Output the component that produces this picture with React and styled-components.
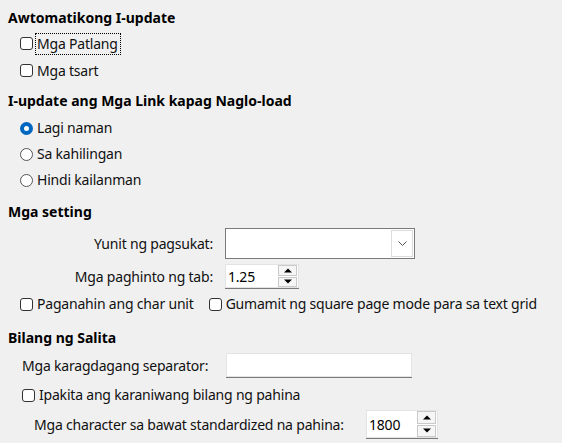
import React from 'react';
import styled, { createGlobalStyle } from 'styled-components';

const GlobalStyle = createGlobalStyle`
  html, body {
    margin: 0;
    padding: 0;
    background: #f0f0f0;
  }
  body {
    font-family: "Noto Sans", "Open Sans", sans-serif;
    font-size: 14px;
    letter-spacing: -0.2px;
    color: #111;
  }
`;

const Page = styled.div`
  width: 562px;
  height: 443px;
  box-sizing: border-box;
  padding: 7px 8px 0 8px;
  display: flex;
  flex-direction: column;
  overflow: hidden;
`;

const Section = styled.div`
  display: flex;
  flex-direction: column;
  margin-top: ${p => p.$top || 0}px;
`;

const Heading = styled.div`
  font-weight: 700;
  font-size: 14px;
  letter-spacing: 0;
  height: 22px;
  line-height: 22px;
  color: #000;
`;

const Items = styled.div`
  display: flex;
  flex-direction: column;
  padding-left: ${p => p.$indent ?? 12}px;
  margin-top: ${p => p.$top || 0}px;
`;

const Row = styled.div`
  display: flex;
  align-items: center;
  height: ${p => p.$h || 26}px;
  gap: ${p => p.$gap || 0}px;
  margin-top: ${p => p.$top || 0}px;
  padding-left: ${p => p.$indent || 0}px;
`;

const Option = styled.label`
  display: inline-flex;
  align-items: center;
  gap: 2px;
  white-space: nowrap;
`;

const Box = styled.span`
  width: 11px;
  height: 11px;
  border: 1px solid #333;
  border-radius: 3px;
  background: #fff;
  flex: none;
`;

const Radio = styled.span`
  flex: none;
  border-radius: 50%;
  background: #fff;
  width: ${p => (p.$on ? 5 : 11)}px;
  height: ${p => (p.$on ? 5 : 11)}px;
  border: ${p => (p.$on ? '4px solid #0067c0' : '1px solid #555')};
`;

const Text = styled.span`
  padding: 0 2px 1px 1px;
  border: 1px dotted ${p => (p.$focus ? '#000' : 'transparent')};
`;

const FormGrid = styled.div`
  display: grid;
  grid-template-columns: ${p => p.$label}px auto;
  column-gap: 12px;
  row-gap: 5px;
  align-items: center;
  margin-top: 5px;
`;

const Label = styled.span`
  text-align: ${p => p.$align || 'right'};
  width: ${p => (p.$w ? `${p.$w}px` : 'auto')};
  flex: none;
  white-space: nowrap;
`;

const Combo = styled.div`
  width: 186px;
  height: 27px;
  border: 1px solid #7a7a7a;
  background: #fff;
  display: flex;
  justify-content: flex-end;
  align-items: stretch;
  padding: 1px;
`;

const ComboButton = styled.div`
  width: 20px;
  border: 1px solid #dcdcdc;
  display: flex;
  align-items: center;
  justify-content: center;
`;

const Field = styled.div`
  width: ${p => p.$w}px;
  height: ${p => p.$h || 25}px;
  background: #fff;
  border-bottom: 1px solid #7a7a7a;
  box-shadow: inset 0 0 0 1px #e3e3e3;
  box-sizing: border-box;
  display: flex;
  align-items: center;
  padding-left: 3px;
  position: relative;
  color: #000;
`;

const Spin = styled.div`
  position: absolute;
  right: 2px;
  top: 1px;
  bottom: 1px;
  width: 19px;
  display: flex;
  flex-direction: column;
  gap: 1px;
`;

const SpinButton = styled.div`
  flex: 1;
  border: 1px solid #c9c9c9;
  background: #f6f6f6;
  display: flex;
  align-items: center;
  justify-content: center;
`;

const Arrow = ({ up }) => (
  <svg width="8" height="5" viewBox="0 0 8 5">
    <path d={up ? 'M0 4.5 L4 0.5 L8 4.5 Z' : 'M0 0.5 L8 0.5 L4 4.5 Z'} fill="#000" />
  </svg>
);

const SpinField = ({ value, w, h }) => (
  <Field $w={w} $h={h}>
    {value}
    <Spin>
      <SpinButton><Arrow up /></SpinButton>
      <SpinButton><Arrow /></SpinButton>
    </Spin>
  </Field>
);

const Check = ({ children, focus }) => (
  <Option>
    <Box />
    <Text $focus={focus}>{children}</Text>
  </Option>
);

const RadioOption = ({ children, on }) => (
  <Option>
    <Radio $on={on} />
    <Text>{children}</Text>
  </Option>
);

export default function App() {
  return (
    <>
      <GlobalStyle />
      <Page>
        <Section>
          <Heading>Awtomatikong I-update</Heading>
          <Items $top={1}>
            <Row $h={27}><Check focus>Mga Patlang</Check></Row>
            <Row $h={27}><Check>Mga tsart</Check></Row>
          </Items>
        </Section>

        <Section $top={6}>
          <Heading>I-update ang Mga Link kapag Naglo-load</Heading>
          <Items $top={3}>
            <Row><RadioOption on>Lagi naman</RadioOption></Row>
            <Row><RadioOption>Sa kahilingan</RadioOption></Row>
            <Row><RadioOption>Hindi kailanman</RadioOption></Row>
          </Items>
        </Section>

        <Section $top={8}>
          <Heading>Mga setting</Heading>
          <Items $indent={0}>
            <FormGrid $label={205}>
              <Label>Yunit ng pagsukat:</Label>
              <Combo>
                <ComboButton>
                  <svg width="9" height="5" viewBox="0 0 9 5">
                    <path d="M0.5 0.5 L4.5 4.5 L8.5 0.5" fill="none" stroke="#555" strokeWidth="1" />
                  </svg>
                </ComboButton>
              </Combo>
              <Label>Mga paghinto ng tab:</Label>
              <div>
                <SpinField value="1.25" w={74} />
              </div>
            </FormGrid>
            <Row $top={2} $gap={12} $indent={12}>
              <Check>Paganahin ang char unit</Check>
              <Check>Gumamit ng square page mode para sa text grid</Check>
            </Row>
          </Items>
        </Section>

        <Section $top={10}>
          <Heading>Bilang ng Salita</Heading>
          <Items $indent={14}>
            <Row $h={25} $gap={12} $top={4}>
              <Label $align="left" $w={192}>Mga karagdagang separator:</Label>
              <Field $w={186} />
            </Row>
            <Row $top={4} $indent={-2}>
              <Check>Ipakita ang karaniwang bilang ng pahina</Check>
            </Row>
            <Row $h={29} $gap={12} $top={2} $indent={12}>
              <Label $align="left" $w={320}>Mga character sa bawat standardized na pahina:</Label>
              <SpinField value="1800" w={72} h={29} />
            </Row>
          </Items>
        </Section>
      </Page>
    </>
  );
}
